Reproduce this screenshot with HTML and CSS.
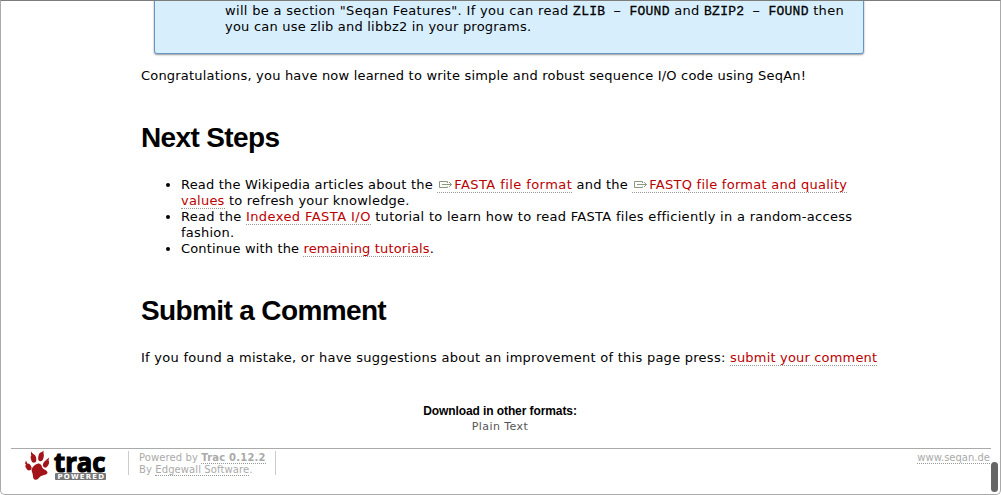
FILE: index.html
```html
<!DOCTYPE html>
<html lang="en">
<head>
<meta charset="utf-8">
<title>Tutorial – SeqAn</title>
<link rel="stylesheet" href="styles.css">
</head>
<body>
<div class="window">
<main class="content">
<div class="note">
<div class="line n1">will be a section "Seqan Features". If you can read <code>ZLIB – FOUND</code> and <code>BZIP2 – FOUND</code> then</div>
<div class="line n2">you can use zlib and libbz2 in your programs.</div>
</div>
<p class="line congrats">Congratulations, you have now learned to write simple and robust sequence I/O code using SeqAn!</p>
<h1 class="h-next">Next Steps</h1>
<ul class="steps">
<li><div class="line l1">Read the Wikipedia articles about the <a class="wide" href="#"><svg class="ext" viewBox="0 0 17 10"><path d="M10.500 3V1.500H2.500V7.500H10.500V6.500M5 4.500H14.500M12 2L14.500 4.500L12 7"/></svg>FASTA file format</a> and the <a href="#"><svg class="ext" viewBox="0 0 17 10"><path d="M10.500 3V1.500H2.500V7.500H10.500V6.500M5 4.500H14.500M12 2L14.500 4.500L12 7"/></svg>FASTQ file format and quality</a></div>
<div class="line l2"><a href="#">values</a> to refresh your knowledge.</div></li>
<li><div class="line l3">Read the <a class="wide" href="#">Indexed FASTA I/O</a> tutorial to learn how to read FASTA files efficiently in a random-access</div>
<div class="line l4">fashion.</div></li>
<li><div class="line l5">Continue with the <a href="#">remaining tutorials</a>.</div></li>
</ul>
<h1 class="h-comment">Submit a Comment</h1>
<p class="line mistake">If you found a mistake, or have suggestions about an improvement of this page press: <a href="#">submit your comment</a></p>
</main>
<div class="formats"><h3>Download in other formats:</h3><span class="plain">Plain Text</span></div>
<footer class="footer">
<svg class="logo" viewBox="0 0 84 32">
<g fill="#a21419">
<ellipse cx="4.500" cy="17" rx="2.700" ry="3.600" transform="rotate(-30 4.500 17)"/>
<ellipse cx="9.500" cy="8.500" rx="2.700" ry="4.200" transform="rotate(-12 9.500 8.500)"/>
<ellipse cx="17" cy="6.800" rx="2.700" ry="4.500" transform="rotate(12 17 6.800)"/>
<ellipse cx="22" cy="13.800" rx="2.600" ry="4" transform="rotate(28 22 13.800)"/>
<path d="M12.500 14C15 12.500 17.500 14 18 17C18.500 19.500 23.500 20 23.500 22.500C23.500 25 19 25 17 26C14.500 27.500 14 30 11.500 29.800C8.500 29.500 9.300 26 8.500 23.500C7.700 21 7 19.500 8.500 17.500C9.500 16 11 15 12.500 14Z"/>
<path d="M2 10.500L4 15L1 14ZM7 1.500L10 5H7ZM19.500 .5L19.500 4L17 3ZM25 7.500L24.500 11L22 10Z"/>
</g>
<text class="trac" x="30" y="22" textLength="51.500" lengthAdjust="spacingAndGlyphs">trac</text>
<rect x="31" y="23" width="51" height="7" rx="1" fill="#777"/>
<text class="powered" x="33.500" y="29" textLength="46.500">POWERED</text>
</svg>
<div class="powered-by"><div class="line f1">Powered by <a href="#"><b>Trac 0.12.2</b></a></div><div class="line f2">By <a href="#">Edgewall Software</a>.</div></div>
<div class="site"><a href="#">www.seqan.de</a></div>
</footer>
<div class="scroll"></div>
</div>
</body>
</html>
```
FILE: styles.css
```css
* { box-sizing: border-box; }
body { margin: 0; background: #fff; color: #000; font: 13px/16px Verdana, "DejaVu Sans", sans-serif; }
.window { position: relative; width: 1001px; height: 495px; overflow: hidden; border: 1px solid #aaa; border-top: 1px solid #7c7c7c; border-radius: 0 0 5px 5px; }
.content { padding-left: 140px; }
.line { white-space: nowrap; height: 16px; letter-spacing: .22px; }
p, h1, h3, ul { margin: 0; padding: 0; }
a { color: #b00; text-decoration: none; border-bottom: 1px dotted #999; }
.note { width: 710px; height: 68px; margin: -15px 0 0 13px; padding: 16px 0 0 70px; background: #d7eefd; border: 1px solid #6695c3; border-radius: 3px; box-shadow: 0 1px 2px #999; }
.n1 { letter-spacing: .32px; }
code { font: 13px/14px "Liberation Mono", monospace; letter-spacing: .25px; -webkit-text-stroke: .3px #000; }
.congrats { margin-top: 14px; letter-spacing: .2px; }
h1 { font: bold 28px/32px Arial, "Liberation Sans", sans-serif; letter-spacing: -.63px; }
.h-next { margin-top: 38px; }
.steps { list-style: disc; padding-left: 40px; margin-top: 23px; }
.l1 { letter-spacing: .2px; }
.l1 a { letter-spacing: .27px; }
.l3 { letter-spacing: .29px; }
.l1 .wide, .l3 .wide { letter-spacing: .43px; }
.l5 { letter-spacing: .15px; }
.h-comment { margin-top: 38px; }
.mistake { margin-top: 23px; letter-spacing: .26px; }
.mistake a { letter-spacing: .18px; }
.ext { display: inline-block; width: 17px; height: 10px; vertical-align: -1px; }
.ext path { fill: none; stroke: #8a9a80; stroke-width: 1; }
.formats { margin-top: 37px; padding-right: 1px; text-align: center; }
h3 { font: bold 12px/16px Arial, "Liberation Sans", sans-serif; letter-spacing: -.09px; }
.plain { display: block; font-size: 11px; color: #555; letter-spacing: .43px; }
.footer { display: flex; margin: 13px 9px 0 10px; border-top: 1px solid #aaa; height: 44px; padding-top: 2px; color: #aaa; font-size: 10px; }
.footer a { color: #aaa; }
.logo { width: 84px; height: 32px; margin: -1px 0 0 13px; }
.trac { font: bold 27px "Open Sans", sans-serif; stroke: #000; stroke-width: 1.2px; }
.powered { font: bold 7px "DejaVu Sans", sans-serif; fill: #fff; }
.powered-by { margin-left: 20px; width: 148px; height: 24px; border: solid #ccc; border-width: 0 1px; padding-left: 10px; }
.powered-by .line { height: 12px; line-height: 13px; letter-spacing: .1px; }
.powered-by b { letter-spacing: .2px; }
.site { margin: 0 1px 0 auto; line-height: 13px; }
.scroll { position: absolute; left: 990px; top: 461px; width: 7px; height: 30px; border-radius: 4px; background: #666; }
```
